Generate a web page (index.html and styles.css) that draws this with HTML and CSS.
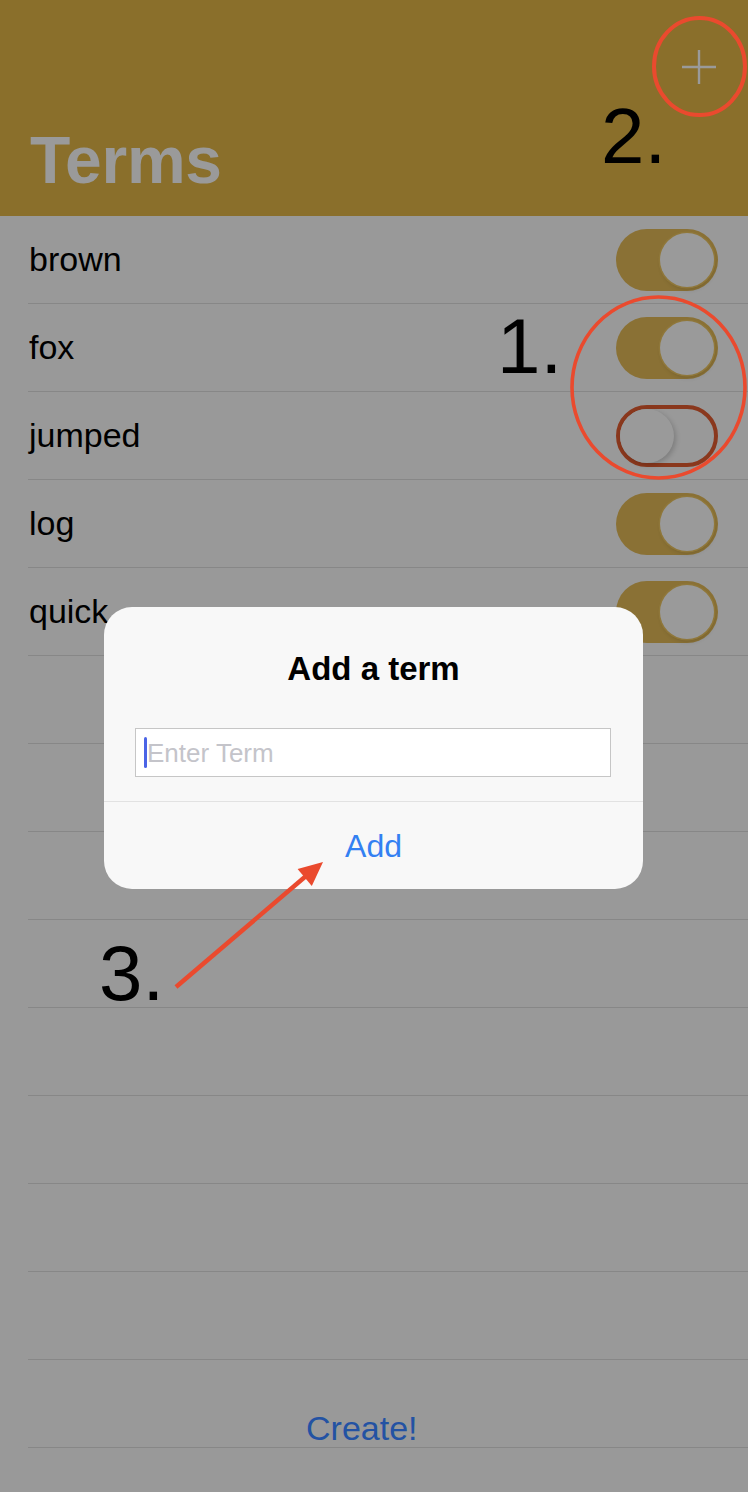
FILE: index.html
```html
<!DOCTYPE html>
<html>
<head>
<meta charset="utf-8">
<link rel="stylesheet" href="styles.css">
</head>
<body>
<div class="screen">
  <header class="nav">
    <div class="nav-top">
      <svg class="plus" width="34" height="34" viewBox="0 0 34 34"><path d="M17 0V34M0 17H34" stroke="#9a9a9a" stroke-width="2.4" fill="none"/></svg>
    </div>
    <h1 class="title">Terms</h1>
  </header>
  <ul class="list">
    <li class="row"><span class="term">brown</span><span class="toggle on"><span class="knob"></span></span></li>
    <li class="row"><span class="term">fox</span><span class="toggle on"><span class="knob"></span></span></li>
    <li class="row"><span class="term">jumped</span><span class="toggle off"><span class="knob"></span></span></li>
    <li class="row"><span class="term">log</span><span class="toggle on"><span class="knob"></span></span></li>
    <li class="row"><span class="term">quick</span><span class="toggle on"><span class="knob"></span></span></li>
    <li class="row"></li>
    <li class="row"></li>
    <li class="row"></li>
    <li class="row"></li>
    <li class="row"></li>
    <li class="row"></li>
    <li class="row"></li>
    <li class="row"></li>
    <li class="row row-create"><span class="create">Create!</span></li>
  </ul>

  <div class="dialog">
    <div class="dialog-title">Add a term</div>
    <div class="field"><span class="caret"></span><span class="placeholder">Enter Term</span></div>
    <div class="dialog-action">Add</div>
  </div>

  <svg class="marks" width="748" height="1492" viewBox="0 0 748 1492">
    <ellipse cx="699.5" cy="66.5" rx="45.5" ry="48.5" fill="none" stroke="#ea4a2e" stroke-width="4"/>
    <ellipse cx="658.5" cy="387.5" rx="86.5" ry="90.5" fill="none" stroke="#ea4a2e" stroke-width="3.6"/>
    <line x1="176" y1="987" x2="306" y2="876" stroke="#ea4a2e" stroke-width="4.5"/>
    <polygon points="323,862 297.6,869.1 311.8,885.9" fill="#ea4a2e"/>
  </svg>
  <div class="mark mark-1">1.</div>
  <div class="mark mark-2">2.</div>
  <div class="mark mark-3">3.</div>
</div>
</body>
</html>
```

FILE: styles.css
```css
* { box-sizing: border-box; }
html, body { margin: 0; padding: 0; }
body {
  width: 748px;
  height: 1492px;
  overflow: hidden;
  background: #999999;
  font-family: "Liberation Sans", Arial, sans-serif;
}
.screen {
  position: relative;
  width: 748px;
  height: 1492px;
  background: #999999;
}
.nav {
  height: 216px;
  background: #8a6f2b;
  display: flex;
  flex-direction: column;
  padding: 50px 32px 0 30px;
}
.nav-top {
  display: flex;
  justify-content: flex-end;
  height: 34px;
}
.plus { display: block; }
.title {
  margin: 44px 0 0 0;
  font-size: 66px;
  line-height: 65px;
  font-weight: bold;
  letter-spacing: -0.3px;
  color: #9a9a9a;
}
.list {
  list-style: none;
  margin: 0;
  padding: 0;
}
.row {
  height: 88px;
  margin-left: 28px;
  padding-right: 30px;
  border-bottom: 1px solid #878787;
  display: flex;
  align-items: center;
  justify-content: space-between;
}
.term {
  font-size: 34px;
  margin-left: 1px;
  color: #000;
}
.toggle {
  width: 102px;
  height: 62px;
  border-radius: 31px;
  display: flex;
  align-items: center;
  padding: 4px;
}
.toggle.on {
  background: #8a7135;
  justify-content: flex-end;
}
.toggle.off {
  background: #999999;
  border: 4px solid #8a381d;
  padding: 0;
  justify-content: flex-start;
}
.knob {
  width: 54px;
  height: 54px;
  border-radius: 50%;
  background: #9a9a9a;
}
.toggle.on .knob {
  box-shadow: 0 0 0 1.5px #8f773a, 1px 3px 4px rgba(0,0,0,0.12);
}
.toggle.off .knob {
  box-shadow: 2px 2px 5px rgba(0,0,0,0.18);
}
.row-create {
  align-items: flex-start;
  justify-content: flex-start;
  padding-top: 49px;
  padding-left: 278px;
}
.create {
  font-size: 34px;
  line-height: 39px;
  color: #2352a3;
}
.dialog {
  position: absolute;
  left: 104px;
  top: 607px;
  width: 539px;
  height: 282px;
  background: #f8f8f8;
  border-radius: 28px;
  display: flex;
  flex-direction: column;
  padding-top: 42px;
}
.dialog-title {
  text-align: center;
  font-size: 33px;
  line-height: 40px;
  font-weight: bold;
  color: #000;
}
.field {
  margin: 39px 32px 0 31px;
  height: 49px;
  background: #ffffff;
  border: 1px solid #c6c6c6;
  display: flex;
  align-items: center;
  padding-left: 8px;
}
.caret {
  width: 3px;
  height: 31px;
  border-radius: 2px;
  background: #4b64e6;
}
.placeholder {
  margin-left: 0;
  font-size: 26px;
  line-height: 30px;
  color: #c4c4ca;
}
.dialog-action {
  margin-top: 24px;
  border-top: 1px solid #e2e2e2;
  flex: 1;
  display: flex;
  align-items: center;
  justify-content: center;
  font-size: 32px;
  line-height: 38px;
  color: #3380f2;
}
.marks {
  position: absolute;
  left: 0;
  top: 0;
  pointer-events: none;
}
.mark {
  position: absolute;
  font-size: 78px;
  line-height: 78px;
  color: #000;
}
.mark-1 { left: 497px; top: 307px; }
.mark-2 { left: 601px; top: 97px; }
.mark-3 { left: 99px; top: 934px; }
```
